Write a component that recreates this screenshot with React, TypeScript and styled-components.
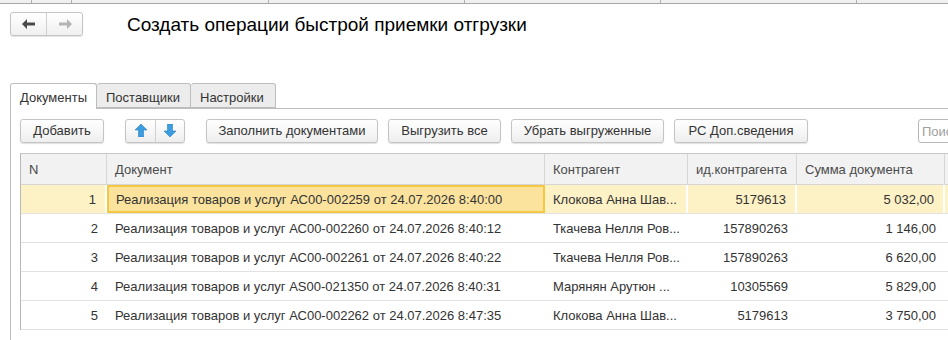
import React from "react";
import styled, { createGlobalStyle } from "styled-components";

const GlobalStyle = createGlobalStyle`
  html, body {
    margin: 0;
    padding: 0;
    background: #ffffff;
    overflow: hidden;
  }
  body {
    font-family: "Liberation Sans", Arial, sans-serif;
    color: #333333;
  }
`;

const Page = styled.div`
  width: 948px;
  height: 340px;
  overflow: hidden;
`;

const TopStrip = styled.div`
  display: flex;
  height: 3px;
  background: #f0f0f0;
  border-bottom: 1px solid #a8a8a8;
`;

const StripCell = styled.div<{ w: number }>`
  width: ${(p) => p.w}px;
  flex: none;
  border-right: 1px solid #b0b0b0;
`;

const HeaderRow = styled.div`
  display: flex;
  align-items: center;
  padding: 8px 0 0 10px;
  height: 24px;
`;

const NavGroup = styled.div`
  display: flex;
  height: 22px;
  border: 1px solid #c4c4c4;
  border-radius: 3px;
  background: linear-gradient(#ffffff, #f0f0f0);
  box-shadow: 0 1px 1px rgba(0, 0, 0, 0.12);
`;

const NavButton = styled.div<{ divider?: boolean; w?: number }>`
  width: ${(p) => p.w ?? 35}px;
  display: flex;
  align-items: center;
  justify-content: center;
  border-right: ${(p) => (p.divider ? "1px solid #d0d0d0" : "none")};
`;

const Title = styled.h1`
  margin: 2px 0 0 44px;
  font-size: 19px;
  font-weight: normal;
  color: #000000;
  white-space: nowrap;
`;

const TabsRow = styled.div`
  display: flex;
  margin-top: 47px;
  padding-left: 10px;
  height: 25px;
  position: relative;
  z-index: 1;
`;

const Tab = styled.div<{ active?: boolean; w: number }>`
  width: ${(p) => p.w}px;
  box-sizing: border-box;
  height: ${(p) => (p.active ? "26px" : "25px")};
  border: 1px solid #bdbdbd;
  border-bottom: ${(p) => (p.active ? "none" : "1px solid #bdbdbd")};
  border-left: ${(p) => (p.active ? "1px solid #bdbdbd" : "none")};
  border-radius: 3px 3px 0 0;
  background: ${(p) => (p.active ? "#ffffff" : "#ececec")};
  font-size: 13px;
  color: #333333;
  padding: 6px 0 0 9px;
  white-space: nowrap;
`;

const Panel = styled.div`
  margin-left: 10px;
  border-left: 1px solid #bdbdbd;
  border-top: 1px solid #bdbdbd;
  padding: 9px 0 0 9px;
  height: 240px;
`;

const Toolbar = styled.div`
  display: flex;
  align-items: center;
  height: 25px;
`;

const Button = styled.div<{ w: number; gap?: number }>`
  width: ${(p) => p.w}px;
  margin-left: ${(p) => p.gap ?? 10}px;
  box-sizing: border-box;
  height: 24px;
  flex: none;
  display: flex;
  align-items: center;
  justify-content: center;
  border: 1px solid #c4c4c4;
  border-radius: 3px;
  background: linear-gradient(#ffffff, #eeeeee);
  box-shadow: 0 1px 1px rgba(0, 0, 0, 0.12);
  font-size: 13px;
  color: #333333;
  white-space: nowrap;
`;

const ArrowGroup = styled.div`
  display: flex;
  flex: none;
  margin-left: 21px;
  height: 24px;
  box-sizing: border-box;
  border: 1px solid #c4c4c4;
  border-radius: 3px;
  background: linear-gradient(#ffffff, #eeeeee);
  box-shadow: 0 1px 1px rgba(0, 0, 0, 0.12);
`;

const Search = styled.div`
  margin-left: 110px;
  width: 60px;
  height: 24px;
  box-sizing: border-box;
  flex: none;
  border: 1px solid #b8b8b8;
  border-radius: 3px;
  font-size: 13px;
  color: #a0a0a0;
  padding: 4px 0 0 3px;
  white-space: nowrap;
  overflow: hidden;
`;

const Grid = styled.div`
  margin-top: 10px;
  border-left: 1px solid #b8b8b8;
  border-top: 1px solid #c8c8c8;
  width: 1000px;
`;

const Row = styled.div<{ head?: boolean }>`
  display: grid;
  grid-template-columns: 86px 438px 143px 109px 148px 80px;
  height: ${(p) => (p.head ? "31px" : "29px")};
  box-sizing: border-box;
  border-bottom: 1px solid ${(p) => (p.head ? "#d6d6d6" : "#e2e2e2")};
  background: ${(p) => (p.head ? "#f2f2f2" : "#ffffff")};
`;

const HeadCell = styled.div`
  display: flex;
  align-items: center;
  padding-left: 8px;
  border-right: 1px solid #d6d6d6;
  font-size: 13px;
  color: #4a4a4a;
  white-space: nowrap;
`;

const Cell = styled.div<{ right?: boolean; selected?: boolean; current?: boolean }>`
  display: flex;
  align-items: center;
  justify-content: ${(p) => (p.right ? "flex-end" : "flex-start")};
  padding: ${(p) => (p.right ? "0 9px 0 0" : "0 0 0 9px")};
  box-sizing: border-box;
  font-size: 13px;
  color: #333333;
  white-space: nowrap;
  overflow: hidden;
  background: ${(p) => (p.current ? "#fbe39e" : p.selected ? "#fdf1c6" : "transparent")};
  border: ${(p) => (p.current ? "2px solid #f5c842" : "none")};
  border-right: ${(p) =>
    p.current ? "2px solid #f5c842" : p.selected ? "2px solid #ffffff" : "none"};
  padding-left: ${(p) => (p.right ? "0" : p.current ? "7px" : "8px")};
`;

const columns = ["N", "Документ", "Контрагент", "ид.контрагента", "Сумма документа", ""];

const rows = [
  { n: 1, doc: "Реализация товаров и услуг АС00-002259 от 24.07.2026 8:40:00", agent: "Клокова Анна Шав...", id: "5179613", sum: "5 032,00" },
  { n: 2, doc: "Реализация товаров и услуг АС00-002260 от 24.07.2026 8:40:12", agent: "Ткачева Нелля Ров...", id: "157890263", sum: "1 146,00" },
  { n: 3, doc: "Реализация товаров и услуг АС00-002261 от 24.07.2026 8:40:22", agent: "Ткачева Нелля Ров...", id: "157890263", sum: "6 620,00" },
  { n: 4, doc: "Реализация товаров и услуг AS00-021350 от 24.07.2026 8:40:31", agent: "Марянян Арутюн ...", id: "10305569", sum: "5 829,00" },
  { n: 5, doc: "Реализация товаров и услуг АС00-002262 от 24.07.2026 8:47:35", agent: "Клокова Анна Шав...", id: "5179613", sum: "3 750,00" },
];

const HArrow = ({ dir, color }: { dir: "left" | "right"; color: string }) => (
  <svg width="14" height="10" viewBox="0 0 14 10">
    <path
      d={dir === "left" ? "M0 5 L5 0 L5 3.5 L13 3.5 L13 6.5 L5 6.5 L5 10 Z" : "M14 5 L9 0 L9 3.5 L1 3.5 L1 6.5 L9 6.5 L9 10 Z"}
      fill={color}
    />
  </svg>
);

const VArrow = ({ dir }: { dir: "up" | "down" }) => (
  <svg width="12" height="13" viewBox="0 0 12 13">
    <path
      d={dir === "up" ? "M6 0 L12 6 L8.5 6 L8.5 13 L3.5 13 L3.5 6 L0 6 Z" : "M6 13 L12 7 L8.5 7 L8.5 0 L3.5 0 L3.5 7 L0 7 Z"}
      fill="#3b9de0"
      stroke="#2a7fc0"
      strokeWidth="0.6"
    />
  </svg>
);

const App: React.FC = () => {
  return (
    <Page>
      <GlobalStyle />
      <TopStrip>
        <StripCell w={31} />
        <StripCell w={39} />
        <StripCell w={196} />
        <StripCell w={195} />
        <StripCell w={195} />
        <StripCell w={195} />
      </TopStrip>
      <HeaderRow>
        <NavGroup>
          <NavButton divider>
            <HArrow dir="left" color="#4a4a4a" />
          </NavButton>
          <NavButton>
            <HArrow dir="right" color="#b4b4b4" />
          </NavButton>
        </NavGroup>
        <Title>Создать операции быстрой приемки отгрузки</Title>
      </HeaderRow>
      <TabsRow>
        <Tab active w={87}>Документы</Tab>
        <Tab w={94}>Поставщики</Tab>
        <Tab w={85}>Настройки</Tab>
      </TabsRow>
      <Panel>
        <Toolbar>
          <Button w={84} gap={0}>Добавить</Button>
          <ArrowGroup>
            <NavButton divider w={29}>
              <VArrow dir="up" />
            </NavButton>
            <NavButton w={28}>
              <VArrow dir="down" />
            </NavButton>
          </ArrowGroup>
          <Button w={172} gap={21}>Заполнить документами</Button>
          <Button w={113}>Выгрузить все</Button>
          <Button w={153}>Убрать выгруженные</Button>
          <Button w={134}>РС Доп.сведения</Button>
          <Search>Поиск</Search>
        </Toolbar>
        <Grid>
          <Row head>
            {columns.map((c, i) => (
              <HeadCell key={i}>{c}</HeadCell>
            ))}
          </Row>
          {rows.map((r, i) => {
            const sel = i === 0;
            return (
              <Row key={r.n}>
                <Cell right selected={sel}>{r.n}</Cell>
                <Cell current={sel}>{r.doc}</Cell>
                <Cell selected={sel}>{r.agent}</Cell>
                <Cell right selected={sel}>{r.id}</Cell>
                <Cell right selected={sel}>{r.sum}</Cell>
                <Cell selected={sel} />
              </Row>
            );
          })}
        </Grid>
      </Panel>
    </Page>
  );
};

export default App;
